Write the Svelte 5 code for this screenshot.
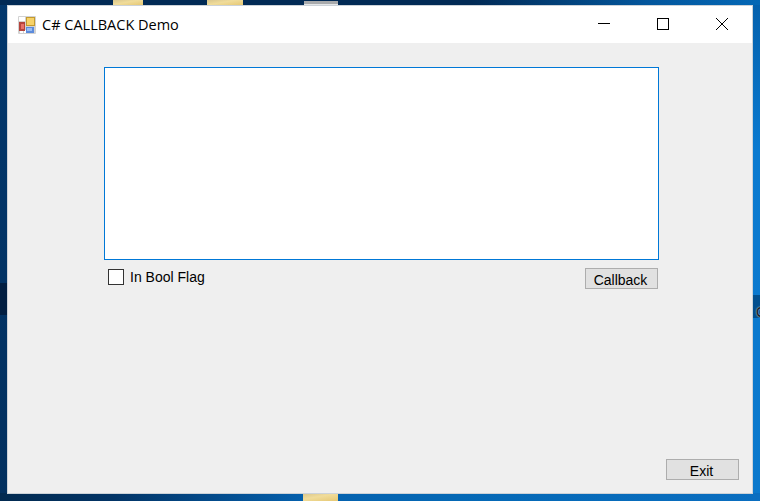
<script>
  let inBoolFlag = false;
  let log = '';

  // scraps of desktop icons peeking out around the window
  const scraps = [
    { cls: 'folder', left: 113, top: 0, width: 30, height: 5 },
    { cls: 'folder', left: 207, top: 0, width: 36, height: 5 },
    { cls: 'paper', left: 304, top: 0, width: 34, height: 5 },
    { cls: 'folder', left: 303, top: 493, width: 35, height: 8 }
  ];
</script>

<div class="desktop">
  {#each scraps as s}
    <div class="scrap {s.cls}" style="left: {s.left}px; top: {s.top}px; width: {s.width}px; height: {s.height}px;"></div>
  {/each}
  <div class="edge-glyph">C</div>

  <div class="window">
    <div class="titlebar">
      <svg class="app-icon" width="18" height="18" viewBox="0 0 18 18">
        <rect x="0" y="0" width="18" height="18" rx="1" fill="#d2d2d2" />
        <rect x="1" y="1" width="6" height="4" fill="#fff" />
        <rect x="2" y="14" width="3" height="3" fill="#fff" />
        <rect x="6" y="14" width="2" height="3" fill="#fff" />
        <rect x="1" y="6" width="6" height="9" fill="#b5443c" />
        <rect x="3" y="8" width="3" height="5" fill="#e8716a" />
        <rect x="8" y="1" width="9" height="9" fill="#c49a2e" />
        <rect x="9" y="2" width="7" height="7" fill="#f7d268" />
        <rect x="8" y="11" width="8" height="6" fill="#5c8bdc" />
        <rect x="9" y="12" width="5" height="3" fill="#9cbef0" />
      </svg>
      <span class="title">C# CALLBACK Demo</span>
      <div class="caption-buttons">
        <button class="caption" aria-label="Minimize">
          <svg width="12" height="12" viewBox="0 0 12 12"><path d="M0 5.5H12" stroke="#000" fill="none" /></svg>
        </button>
        <button class="caption" aria-label="Maximize">
          <svg width="12" height="12" viewBox="0 0 12 12"><rect x="0.5" y="0.5" width="11" height="11" stroke="#000" fill="none" /></svg>
        </button>
        <button class="caption" aria-label="Close">
          <svg width="12" height="12" viewBox="0 0 12 12"><path d="M0 0L12 12M12 0L0 12" stroke="#000" fill="none" /></svg>
        </button>
      </div>
    </div>

    <div class="client">
      <textarea class="output" bind:value={log}></textarea>
      <div class="row">
        <label class="flag">
          <input type="checkbox" bind:checked={inBoolFlag} />
          <span>In Bool Flag</span>
        </label>
        <button class="btn">Callback</button>
      </div>
      <div class="footer">
        <button class="btn">Exit</button>
      </div>
    </div>
  </div>
</div>

<style>
  :global(body) {
    margin: 0;
  }

  .desktop {
    position: relative;
    width: 760px;
    height: 501px;
    box-sizing: border-box;
    padding: 5px 7px 7px 7px;
    overflow: hidden;
    background:
      linear-gradient(#02508f, #024f8e) right 0 top 295px / 8px 23px no-repeat,
      linear-gradient(#021f42, #021f42) left 0 top 283px / 7px 32px no-repeat,
      linear-gradient(90deg, #012a55 0%, #012a55 62%, #03569c 85%, #0468b6 100%) left 0 top 0 / 100% 5px no-repeat,
      linear-gradient(90deg, #022a50 0%, #023466 15%, #0460ad 40%, #0468b5 60%, #0a6ec0 100%) left 0 bottom 0 / 100% 8px no-repeat,
      linear-gradient(#0460ac, #0a7ad0 30%, #0a78cc 100%) right 0 top 0 / 8px 100% no-repeat,
      linear-gradient(#02376c, #02305f) left 0 top 0 / 7px 100% no-repeat;
  }

  .scrap {
    position: absolute;
  }

  .folder {
    background: linear-gradient(170deg, #d8c58c 0%, #f0dc9a 45%, #e6c874 100%);
  }

  .paper {
    background: linear-gradient(#012a55 0 1px, #a8aaac 1px 4px, #e4e6e8 4px);
  }

  .edge-glyph {
    position: absolute;
    left: 756px;
    top: 304px;
    font: 14px "Liberation Sans", sans-serif;
    color: #1a1a1a;
    text-shadow: 0 0 2px #fff;
  }

  .window {
    position: relative;
    display: flex;
    flex-direction: column;
    height: 100%;
    box-sizing: border-box;
    border: 1px solid #ccd2d8;
    background: #efefef;
  }

  .titlebar {
    display: flex;
    align-items: center;
    height: 37px;
    flex: none;
    background: #fff;
    padding-left: 10px;
  }

  .app-icon {
    flex: none;
  }

  .title {
    margin-left: 6px;
    font: 14.5px "Open Sans", sans-serif;
    color: #000;
  }

  .caption-buttons {
    display: flex;
    align-self: flex-start;
    margin-left: auto;
    margin-right: 1px;
  }

  .caption {
    width: 59px;
    height: 36px;
    padding: 0;
    border: 0;
    background: none;
    display: flex;
    align-items: center;
    justify-content: center;
  }

  .client {
    flex: 1;
    display: flex;
    flex-direction: column;
    padding: 24px 13px 13px 96px;
    font: 14px "Liberation Sans", sans-serif;
    color: #000;
  }

  .output {
    display: block;
    width: 555px;
    height: 193px;
    box-sizing: border-box;
    margin: 0;
    border: 1px solid #0078d7;
    background: #fff;
    outline: none;
    resize: none;
  }

  .row {
    display: flex;
    align-items: flex-start;
    justify-content: space-between;
    width: 554px;
    margin-top: 8px;
  }

  .flag {
    display: flex;
    align-items: center;
    gap: 6px;
    margin: 1px 0 0 4px;
  }

  .flag input {
    appearance: none;
    width: 16px;
    height: 16px;
    margin: 0;
    box-sizing: border-box;
    border: 1px solid #333;
    background: #fff;
  }

  .btn {
    width: 73px;
    height: 21px;
    box-sizing: border-box;
    padding: 3px 2px 0 0;
    border: 1px solid #adadad;
    background: #e1e1e1;
    font: 14px "Liberation Sans", sans-serif;
    color: #000;
  }

  .footer {
    margin-top: auto;
    display: flex;
    justify-content: flex-end;
  }
</style>
